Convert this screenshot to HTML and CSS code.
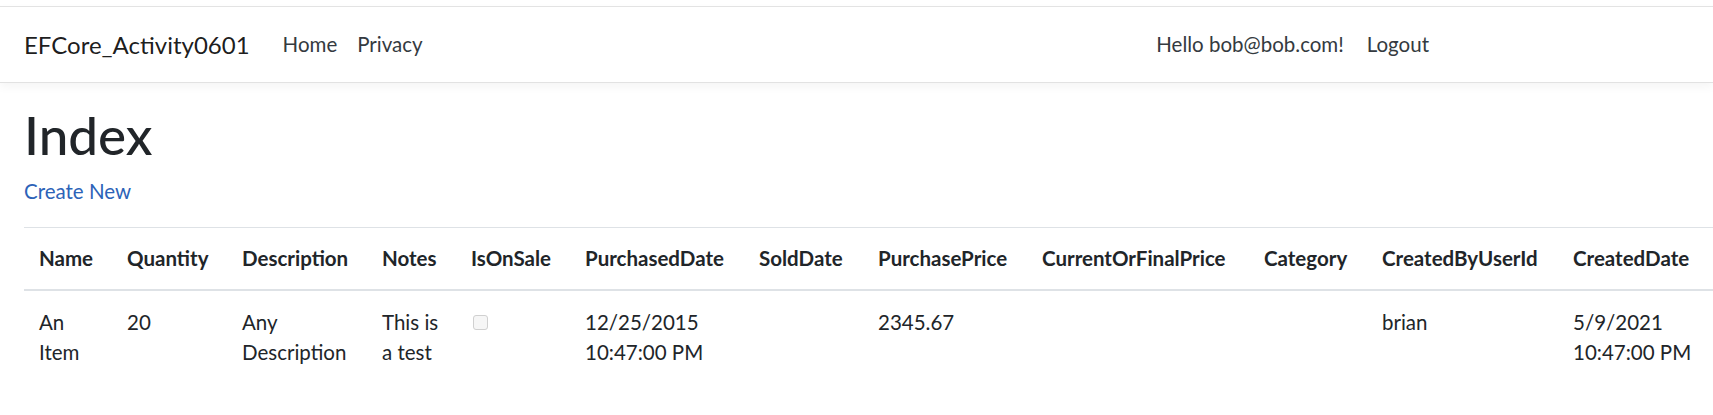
FILE: index.html
```html
<!DOCTYPE html>
<html lang="en">
<head>
<meta charset="utf-8">
<title>Index - EFCore_Activity0601</title>
<link rel="stylesheet" href="styles.css">
</head>
<body>
<header class="site-header">
  <nav class="navbar">
    <div class="container nav-inner">
      <a class="brand" href="#">EFCore_Activity0601</a>
      <ul class="nav-main">
        <li><a class="nav-link" href="#">Home</a></li>
        <li><a class="nav-link" href="#">Privacy</a></li>
      </ul>
      <ul class="nav-user">
        <li><a class="nav-link" href="#">Hello bob@bob.com!</a></li>
        <li><button class="nav-link logout" type="button">Logout</button></li>
      </ul>
    </div>
  </nav>
</header>
<main class="container page">
  <h1 class="page-title">Index</h1>
  <p class="actions"><a class="link" href="#">Create New</a></p>
  <table class="data-table">
    <colgroup>
      <col class="c-name">
      <col class="c-qty">
      <col class="c-desc">
      <col class="c-notes">
      <col class="c-sale">
      <col class="c-pdate">
      <col class="c-sdate">
      <col class="c-pprice">
      <col class="c-cprice">
      <col class="c-cat">
      <col class="c-user">
      <col class="c-cdate">
      <col class="c-extra">
    </colgroup>
    <thead>
      <tr>
        <th>Name</th>
        <th>Quantity</th>
        <th>Description</th>
        <th>Notes</th>
        <th>IsOnSale</th>
        <th>PurchasedDate</th>
        <th>SoldDate</th>
        <th>PurchasePrice</th>
        <th>CurrentOrFinalPrice</th>
        <th>Category</th>
        <th>CreatedByUserId</th>
        <th>CreatedDate</th>
        <th></th>
      </tr>
    </thead>
    <tbody>
      <tr>
        <td>An Item</td>
        <td>20</td>
        <td>Any Description</td>
        <td>This is a test</td>
        <td><input class="check" type="checkbox" disabled></td>
        <td>12/25/2015 10:47:00 PM</td>
        <td></td>
        <td>2345.67</td>
        <td></td>
        <td></td>
        <td>brian</td>
        <td>5/9/2021 10:47:00 PM</td>
        <td></td>
      </tr>
    </tbody>
  </table>
</main>
</body>
</html>
```

FILE: styles.css
```css
html, body {
  margin: 0;
  padding: 0;
  overflow: hidden;
  background: #fff;
}

body {
  font-family: Lato, "Open Sans", sans-serif;
  font-size: 20.5px;
  line-height: 1.5;
  color: #212529;
}

.site-header {
  padding-top: 6px;
}

.navbar {
  border-top: 1px solid #e3e3e3;
  border-bottom: 1px solid #e2e2e2;
  box-shadow: 0 4px 9px rgba(0, 0, 0, 0.045);
  height: 77px;
  box-sizing: border-box;
  display: flex;
  align-items: center;
}

.container {
  width: 1414px;
  padding-left: 24px;
  box-sizing: content-box;
}

.nav-inner {
  display: flex;
  align-items: center;
}

.brand {
  font-size: 24px;
  color: rgba(0, 0, 0, 0.9);
  text-decoration: none;
  margin-right: 23px;
  white-space: nowrap;
}

.nav-main,
.nav-user {
  list-style: none;
  margin: 0;
  padding: 0;
  display: flex;
  align-items: center;
}

.nav-main {
  flex-grow: 1;
}

.nav-link {
  display: block;
  padding: 0 10px;
  color: #343a40;
  text-decoration: none;
  font: inherit;
  white-space: nowrap;
}

.logout {
  background: none;
  border: 0;
  padding: 0 9px 0 13px;
  cursor: pointer;
}

.page {
  padding-top: 20px;
}

.page-title {
  margin: 0 0 10px;
  font-size: 53px;
  font-weight: 500;
  line-height: 63px;
}

.actions {
  margin: 0 0 20px;
}

.link {
  color: #2c63b8;
  text-decoration: none;
}

.data-table {
  border-collapse: collapse;
  table-layout: fixed;
  width: 1900px;
}

.data-table th,
.data-table td {
  padding: 15.4px 15px;
  text-align: left;
  vertical-align: top;
  border-top: 1px solid #dee2e6;
}

.data-table th {
  font-weight: 700;
  white-space: nowrap;
  border-bottom: 2px solid #dee2e6;
}

.c-name { width: 88px; }
.c-qty { width: 115px; }
.c-desc { width: 140px; }
.c-notes { width: 89px; }
.c-sale { width: 114px; }
.c-pdate { width: 174px; }
.c-sdate { width: 119px; }
.c-pprice { width: 164px; }
.c-cprice { width: 222px; }
.c-cat { width: 118px; }
.c-user { width: 191px; }
.c-cdate { width: 151px; }
.c-extra { width: 215px; }

.check {
  appearance: none;
  -webkit-appearance: none;
  width: 15px;
  height: 15px;
  margin: 0 0 0 2px;
  border: 1px solid #d0d0d0;
  border-radius: 3px;
  background: #f6f6f6;
  box-sizing: border-box;
  vertical-align: baseline;
}
```
